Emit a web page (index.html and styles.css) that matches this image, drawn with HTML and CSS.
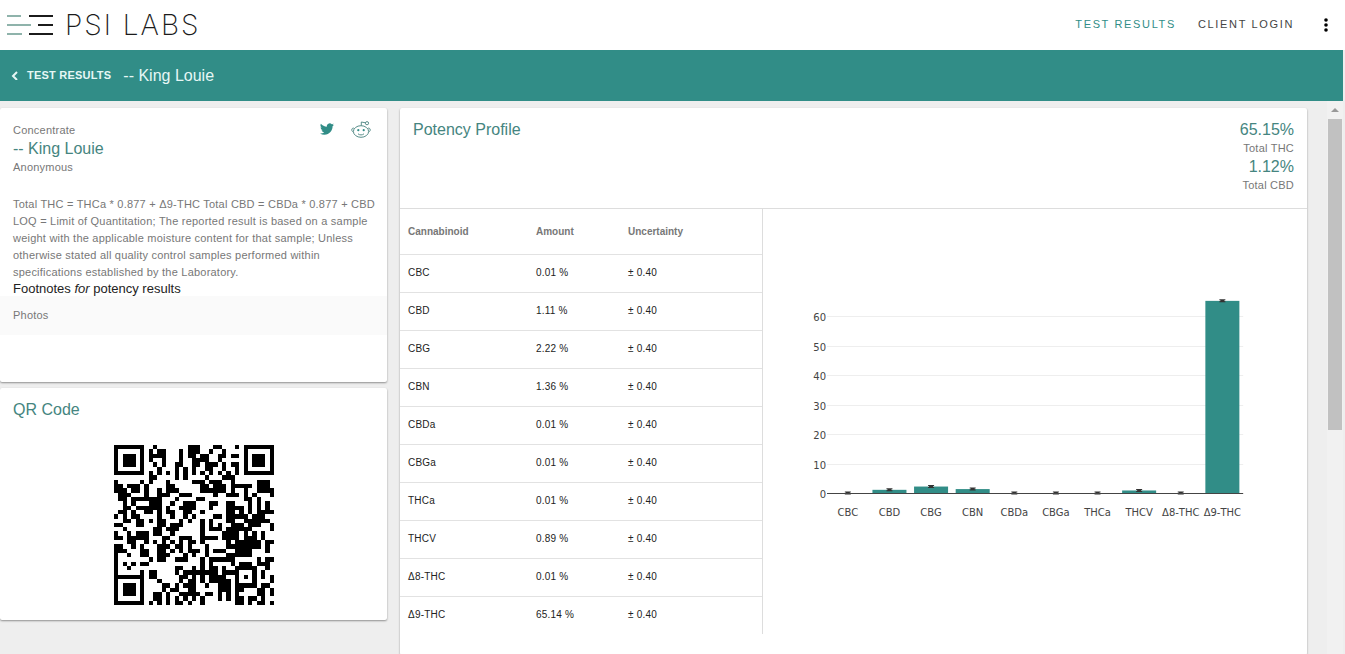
FILE: index.html
```
<!DOCTYPE html>
<html lang="en">
<head>
<meta charset="utf-8">
<title>PSI Labs - King Louie</title>
<link rel="stylesheet" href="styles.css">
</head>
<body>
<header class="topbar">
  <a class="brand" href="#">
    <svg class="brand-mark" viewBox="0 0 48 24" width="48" height="24" aria-hidden="true">
      <g stroke="#8fb3ab" stroke-width="2"><path d="M1 3h14M1 12h24M1 21h15"/></g>
      <g stroke="#1b1b1b" stroke-width="2"><path d="M23 3h24M32 12h15M23 21h24"/></g>
    </svg>
    <span class="brand-name">PSI LABS</span>
  </a>
  <nav class="topnav">
    <a class="topnav-link active" href="#">TEST RESULTS</a>
    <a class="topnav-link" href="#">CLIENT LOGIN</a>
    <button class="menu-button" type="button" aria-label="Menu">
      <svg viewBox="0 0 6 16" width="6" height="16"><circle cx="3" cy="3" r="1.800"/><circle cx="3" cy="8" r="1.800"/><circle cx="3" cy="13" r="1.800"/></svg>
    </button>
  </nav>
</header>
<div class="crumbs">
  <a class="back" href="#">
    <svg viewBox="0 0 8 10" width="8" height="10" aria-hidden="true"><path d="M6 2L2 6l4 4" fill="none" stroke="currentColor" stroke-width="2"/></svg>
    TEST RESULTS</a>
  <h1 class="crumb-title">-- King Louie</h1>
</div>
<div class="body">
  <main class="pane">
    <div class="side">
      <section class="card info">
        <div class="info-head">
          <div>
            <div class="meta">Concentrate</div>
            <h2 class="title">-- King Louie</h2>
            <div class="meta">Anonymous</div>
          </div>
          <div class="share">
            <a href="#" aria-label="Twitter"><svg viewBox="0 0 24 24" width="14" height="14"><path fill="#318d87" d="M23.95 4.57a10 10 0 0 1-2.82.77 4.96 4.96 0 0 0 2.16-2.72c-.95.55-2 .95-3.13 1.18a4.92 4.92 0 0 0-8.38 4.48C7.69 8.09 4.07 6.13 1.64 3.16a4.92 4.92 0 0 0 1.52 6.57 4.9 4.9 0 0 1-2.23-.61v.06a4.92 4.92 0 0 0 3.95 4.83 5 5 0 0 1-2.21.08 4.94 4.94 0 0 0 4.6 3.42A9.87 9.87 0 0 1 0 19.54a14 14 0 0 0 7.55 2.21c9.05 0 14-7.5 14-13.98 0-.21 0-.42-.02-.63a10 10 0 0 0 2.46-2.55z"/></svg></a>
            <a href="#" aria-label="Reddit"><svg viewBox="0 0 20 18" width="20" height="18" fill="none" stroke="#5a8f8b"><ellipse cx="10" cy="10.500" rx="7.600" ry="5.800"/><path d="M3.400 7.500C2 6.500.7 7.500.8 9c0 1 .8 1.800 1.600 2M16.600 7.500c1.400-1 2.700 0 2.600 1.500 0 1-.8 1.800-1.600 2M10.300 4.700V1l4.200.8M7 12.800c1.700 1.500 4.300 1.500 6 0"/><circle cx="16" cy="2.200" r="1.600"/><circle cx="7.300" cy="9.200" r="1.100" fill="#318d87" stroke="none"/><circle cx="12.700" cy="9.200" r="1.100" fill="#318d87" stroke="none"/></svg></a>
          </div>
        </div>
        <p class="notes">Total THC = THCa * 0.877 + Δ9-THC Total CBD = CBDa * 0.877 + CBD LOQ = Limit of Quantitation; The reported result is based on a sample weight with the applicable moisture content for that sample; Unless otherwise stated all quality control samples performed within specifications established by the Laboratory.</p>
        <p class="footnotes">Footnotes <em>for</em> potency results</p>
        <h3 class="photos">Photos</h3>
        <div class="photo-area"></div>
      </section>
      <section class="card qr-card">
        <h2 class="title">QR Code</h2>
        <svg class="qr" id="qr" viewBox="0 0 37 37" width="160" height="160" role="img" aria-label="QR code" shape-rendering="crispEdges"></svg>
      </section>
    </div>
    <section class="card profile">
      <div class="profile-head">
        <h2 class="title">Potency Profile</h2>
        <dl class="totals">
          <dd>65.15%</dd><dt>Total THC</dt>
          <dd>1.12%</dd><dt>Total CBD</dt>
        </dl>
      </div>
      <div class="profile-body">
        <div class="table-wrap">
          <table class="results">
            <thead><tr><th>Cannabinoid</th><th>Amount</th><th>Uncertainty</th></tr></thead>
            <tbody>
              <tr><td>CBC</td><td>0.01 %</td><td>± 0.40</td></tr>
              <tr><td>CBD</td><td>1.11 %</td><td>± 0.40</td></tr>
              <tr><td>CBG</td><td>2.22 %</td><td>± 0.40</td></tr>
              <tr><td>CBN</td><td>1.36 %</td><td>± 0.40</td></tr>
              <tr><td>CBDa</td><td>0.01 %</td><td>± 0.40</td></tr>
              <tr><td>CBGa</td><td>0.01 %</td><td>± 0.40</td></tr>
              <tr><td>THCa</td><td>0.01 %</td><td>± 0.40</td></tr>
              <tr><td>THCV</td><td>0.89 %</td><td>± 0.40</td></tr>
              <tr><td>Δ8-THC</td><td>0.01 %</td><td>± 0.40</td></tr>
              <tr><td>Δ9-THC</td><td>65.14 %</td><td>± 0.40</td></tr>
            </tbody>
          </table>
        </div>
        <div class="chart-wrap">
          <svg class="chart" id="chart" viewBox="0 0 544 400" role="img" aria-label="Cannabinoid amounts"></svg>
        </div>
      </div>
    </section>
  </main>
  <div class="scrollbar" aria-hidden="true"><div class="arrow"></div><div class="thumb"></div></div>
</div>
<script src="app.js"></script>
</body>
</html>
```
FILE: styles.css
```
* { box-sizing: border-box; }
body {
  margin: 0;
  height: 100vh;
  display: flex;
  flex-direction: column;
  overflow: hidden;
  background: #eee;
  color: #222;
  font-family: "Liberation Sans", Arial, sans-serif;
}
h1, h2, h3, p, dl, dd { margin: 0; font-weight: 400; }
a { text-decoration: none; color: inherit; }

.topbar {
  flex: none;
  height: 50px;
  display: flex;
  align-items: center;
  justify-content: space-between;
  padding: 0 16px 0 6px;
  background: #fff;
}
.brand { display: flex; align-items: center; gap: 11px; color: #1b1b1b; }
.brand-name { font: 200 28px/30px Inter, sans-serif; letter-spacing: 2px; }
.topnav { display: flex; align-items: center; font-size: 11px; letter-spacing: .15em; line-height: 14px; }
.topnav-link { margin-right: 22px; padding-bottom: 2px; color: #444; }
.topnav-link.active { color: #318d87; }
.menu-button { padding: 0; margin-left: 7px; border: 0; background: none; display: flex; }

.crumbs {
  flex: none;
  height: 51px;
  margin-right: 2px;
  padding-left: 11px;
  display: flex;
  align-items: center;
  gap: 12px;
  background: #318d87;
  color: #e6f7f5;
}
.back { display: flex; align-items: center; gap: 8px; padding-bottom: 2px; font-size: 11px; font-weight: 700; letter-spacing: .02em; }
.crumb-title { font-size: 16px; }

.body { flex: 1; min-height: 0; display: flex; padding-right: 2px; }
.pane {
  flex: 1;
  min-width: 0;
  overflow: hidden;
  display: grid;
  grid-template-columns: minmax(0, 387fr) minmax(0, 907fr);
  gap: 13px;
  padding: 7px 20px 0 0;
}
.scrollbar { flex: none; width: 16px; background: #f1f1f1; padding: 7px 1px 0; }
.arrow {
  width: 0;
  margin: 0 auto 7px;
  border: 4px solid transparent;
  border-top: 0;
  border-bottom: 4px solid #999;
}
.thumb { height: 57%; background: #c1c1c1; }

.card { background: #fff; border-radius: 2px; box-shadow: 0 1px 2px rgba(0, 0, 0, .4); }
.title { font-size: 16px; line-height: 18px; color: #458580; }
.meta { font-size: 11px; line-height: 19px; color: #777; letter-spacing: .02em; }

.info-head { display: flex; justify-content: space-between; padding: 13px 16px 18px 13px; }
.share { display: flex; align-items: flex-start; gap: 17px; }
.share a:first-child { padding-top: 1px; }
.share svg { display: block; }
.notes { padding: 1px 8px 0 13px; font-size: 11px; line-height: 17px; color: #777; letter-spacing: .02em; }
.footnotes { padding-left: 13px; font-size: 13px; line-height: 15px; }
.photos { padding: 10px 13px; font-size: 11px; line-height: 19px; color: #777; background: #fafafa; letter-spacing: .02em; }
.photo-area { height: 47px; }

.qr-card { margin-top: 6px; padding: 13px 13px 15px; }
.qr { display: block; margin: 26px auto 0; }

.profile-head { display: flex; justify-content: space-between; padding: 13px; border-bottom: 1px solid #ddd; }
.totals { text-align: right; }
.totals dd { font-size: 16px; line-height: 18px; color: #458580; }
.totals dt { font-size: 11px; line-height: 19px; color: #777; letter-spacing: .02em; }
.profile-body { display: flex; height: 446px; }
.table-wrap { width: 40%; height: 425px; border-right: 1px solid #ddd; overflow: hidden; }
.results { width: 100%; border-collapse: collapse; font-size: 10px; table-layout: fixed; }
.results th { height: 45px; padding: 0 8px; text-align: left; color: #777; }
.results td { height: 38px; padding: 0 8px 2px; letter-spacing: .02em; }
.results th:first-child { width: 128px; }
.results th:nth-child(2) { width: 92px; }
.results tr { border-bottom: 1px solid #e2e2e2; }
.results tbody tr:last-child { border: 0; }
.chart-wrap { flex: 1; min-width: 0; }
.chart { display: block; width: 100%; font: 10px "DejaVu Sans", Verdana, sans-serif; fill: #444; }
.grid-line { stroke: #eee; }
.axis-line { stroke: #444; }
.bar { fill: #318d87; }
.error-bar { stroke: #333; fill: none; }
.tick-y { text-anchor: end; }
.tick-x { text-anchor: middle; }
```
FILE: app.js
```
const NS = 'http://www.w3.org/2000/svg';
function add(parent, tag, attrs, text) {
  const el = document.createElementNS(NS, tag);
  for (const k in attrs) el.setAttribute(k, attrs[k]);
  if (text !== undefined) el.textContent = text;
  parent.appendChild(el);
}

// Dark modules of each QR row, as columns and column ranges.
const QR_ROWS = [
  '9 17-19 23-24 28',
  '8 10-11 15 17-19 22 25',
  '8-11 15 17-18 20-21 24-25 27-28',
  '8 11 15 18-21 24',
  '9 11 14-15 18-19 21-23 25 27-28',
  '10 14 16 18 21-22 25 28',
  '8 10 12 14 16 18 20 22 24 26 28',
  '8-9 14 16 21 25-27',
  '0 6 8 12 18-20 22-24 27 33-35',
  '0-1 3-5 7 12-13 20-21 23-25 27-31 33-35',
  '0-2 4-5 7 10 12-14 20-25 27 30 33-36',
  '1-3 7 10-12 15-17 23 26-28 30 32 36',
  '1-2 4-10 14 19-20 30-31 33',
  '2 4 8-10 13 16-18 22-23 26-27 31 33 35',
  '2-3 5-10 12 15-18 22 26-29 31 33 35',
  '1-2 4 7-8 10 12-13 16-17 20 26-27 29 31 33-36',
  '0 2 4-5 10 13 16 18 23-24 26-30 32-34',
  '2-3 5-6 8 10-11 15 17 20 22 26-27 30-35',
  '0-1 5-6 10-11 13-15 20 22 24 27-29 31-33 36',
  '2 9-10 12-14 20 22-24 26-31 36',
  '0 3 5-7 9-10 13 20 25-28 30 32 34',
  '0-1 3-7 11-12 15-17 20-23 25-28 30-32 34',
  '3-4 7 9 11 13 15 17-18 20 26 28-33 35-36',
  '0-1 4 6 10-12 14-15 17 21 26-33 35',
  '0-2 6-7 10-11 13 15 17-19 21 23-25 28-31 35',
  '0 3 6-7 10-12 16 18 21 26-31',
  '0 8 10-11 14-16 20 22-27 33 35-36',
  '0 2 4 6-7 20 22 27 29-31 33-35',
  '0 3 14-15 18 20 22-23 25 35',
  '0 6 8-9 14 16-23 25-27 34',
  '8-9 15-16 18 20 22-25 34 36',
  '10 15 17-18 20 22-26 36',
  '11-12 14 16-18 21 24-26 34-35',
  '11 13-14 17-18 24-26 28-29 33-34 36',
  '9-10 12 15-19 21-22 24 26 28 33-34 36',
  '9-10 12 14 16 18 20 24 26 28-29 31-32 34',
  '8 10 12 14-15 17 20 28-29 31 33-34 36'
];
const FINDER = ['1111111', '1000001', '1011101', '1011101', '1011101', '1000001', '1111111'];
const ALIGN = ['11111', '10001', '10101', '10001', '11111'];
const grid = QR_ROWS.map(row => {
  const cells = Array(37).fill('0');
  row.split(' ').forEach(span => {
    const [from, to = from] = span.split('-').map(Number);
    cells.fill('1', from, to + 1);
  });
  return cells;
});
function stamp(top, left, shape) {
  shape.forEach((row, y) => [...row].forEach((v, x) => { grid[top + y][left + x] = v; }));
}
stamp(0, 0, FINDER);
stamp(0, 30, FINDER);
stamp(30, 0, FINDER);
stamp(28, 28, ALIGN);
let d = '';
grid.forEach((row, y) => row.forEach((v, x) => { if (v === '1') d += `M${x} ${y}h1v1h-1z`; }));
add(document.getElementById('qr'), 'path', { d });

const chart = document.getElementById('chart');
const LEFT = 64, RIGHT = 480, BASE = 284, UNIT = 2.95;
const DATA = [['CBC', 0.01], ['CBD', 1.11], ['CBG', 2.22], ['CBN', 1.36], ['CBDa', 0.01],
  ['CBGa', 0.01], ['THCa', 0.01], ['THCV', 0.89], ['Δ8-THC', 0.01], ['Δ9-THC', 65.14]];
for (let v = 0; v <= 60; v += 10) {
  const y = Math.round(BASE - v * UNIT) + 0.5;
  if (v) add(chart, 'line', { class: 'grid-line', x1: LEFT, x2: RIGHT, y1: y, y2: y });
  add(chart, 'text', { class: 'tick-y', x: LEFT - 1, y: y + 4 }, v);
}
const step = (RIGHT - LEFT) / DATA.length;
DATA.forEach(([name, value], i) => {
  const cx = LEFT + step * (i + 0.5);
  const h = value * UNIT;
  const top = BASE - h;
  add(chart, 'rect', { class: 'bar', x: cx - 17, y: top, width: 34, height: h });
  add(chart, 'path', { class: 'error-bar', d: `M${cx - 3} ${top - 1}h6M${cx - 3} ${top + 1}h6M${cx - 2} ${top}h4` });
  add(chart, 'text', { class: 'tick-x', x: cx, y: BASE + 23 }, name);
});
add(chart, 'line', { class: 'axis-line', x1: LEFT, x2: RIGHT, y1: BASE + 0.5, y2: BASE + 0.5 });
```
